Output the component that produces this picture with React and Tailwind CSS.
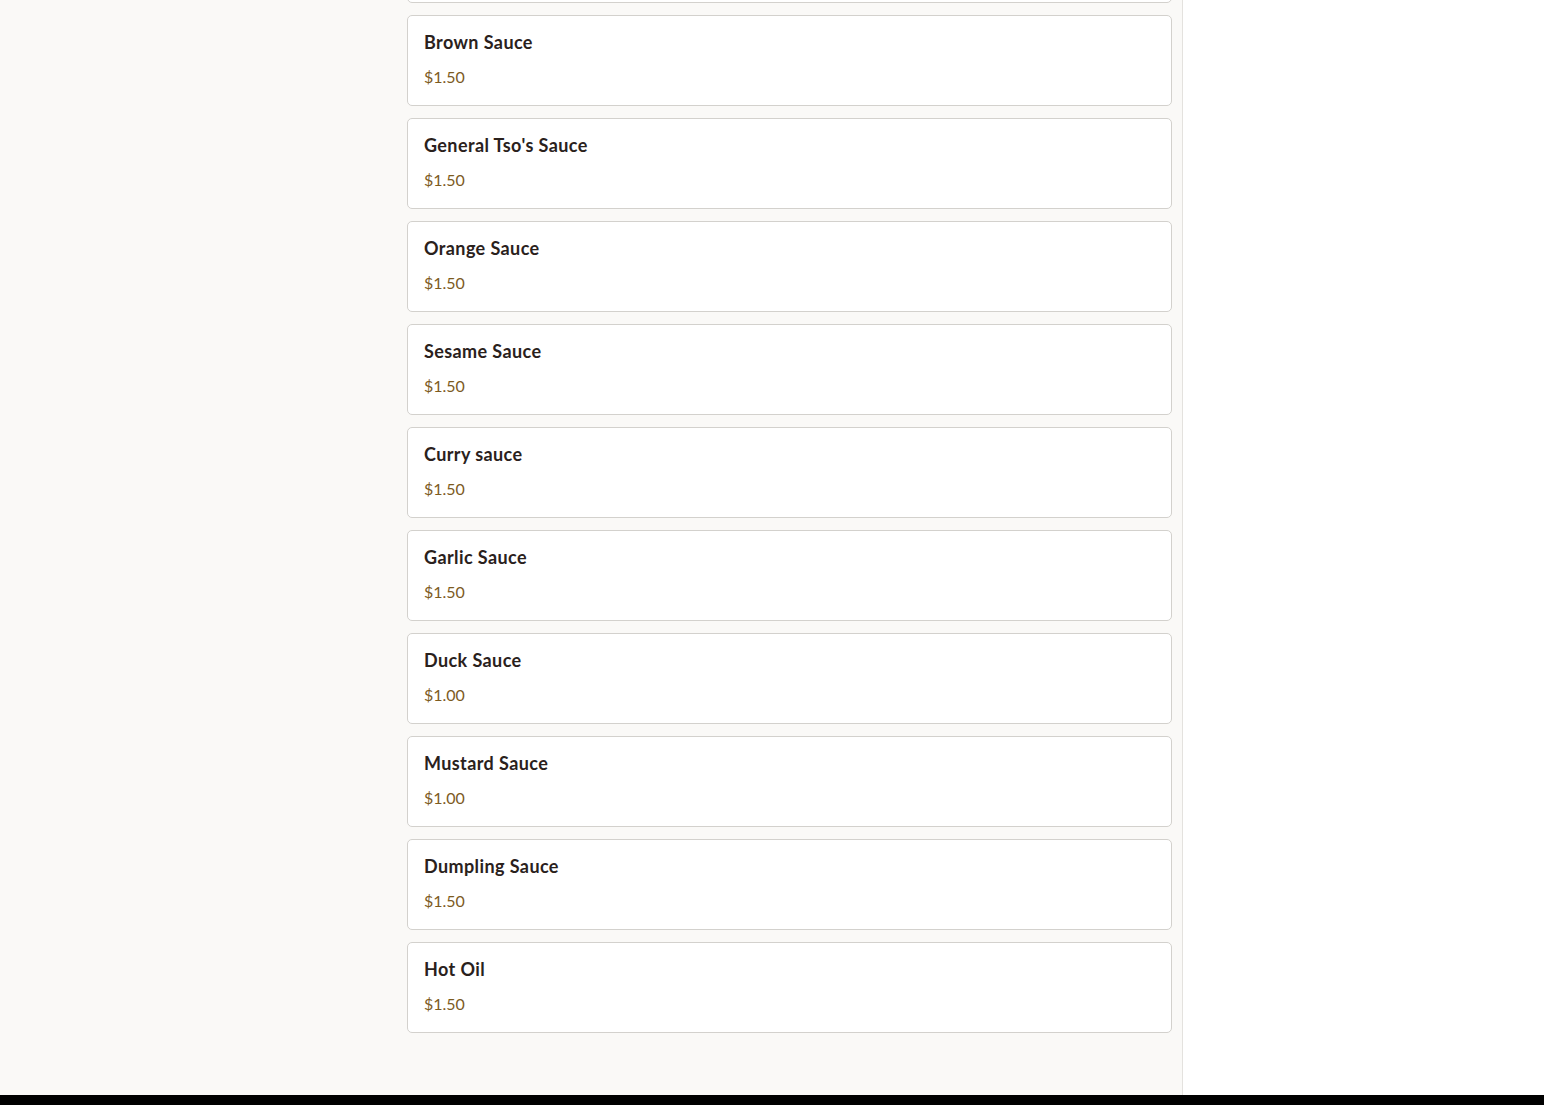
const SAUCES = [
  { name: "Sweet & Sour Sauce", price: "$1.50" },
  { name: "Brown Sauce", price: "$1.50" },
  { name: "General Tso's Sauce", price: "$1.50" },
  { name: "Orange Sauce", price: "$1.50" },
  { name: "Sesame Sauce", price: "$1.50" },
  { name: "Curry sauce", price: "$1.50" },
  { name: "Garlic Sauce", price: "$1.50" },
  { name: "Duck Sauce", price: "$1.00" },
  { name: "Mustard Sauce", price: "$1.00" },
  { name: "Dumpling Sauce", price: "$1.50" },
  { name: "Hot Oil", price: "$1.50" },
];

function ItemCard({ name, price }) {
  return (
    <div className="rounded-[5px] border border-[#d3d1cd] bg-white px-4 pt-[14px] pb-4">
      <p className="text-[18px] leading-6 font-bold tracking-[0.4px] text-[#2a211c]">
        {name}
      </p>
      <p className="mt-[11px] text-[16px] leading-6 text-[#7d5b1f]">{price}</p>
    </div>
  );
}

export default function App() {
  return (
    <div
      className="flex h-[1105px] flex-col overflow-hidden bg-white"
      style={{ fontFamily: "Lato, 'Noto Sans', sans-serif" }}
    >
      <div className="flex flex-1 overflow-hidden">
        <main className="w-[1183px] border-r border-[#e4e2de] bg-[#faf9f7] pl-[407px]">
          {/* list is scrolled: the card above Brown Sauce sits mostly off-screen */}
          <div className="-mt-[88px] flex w-[765px] flex-col gap-3">
            {SAUCES.map((s) => (
              <ItemCard key={s.name} name={s.name} price={s.price} />
            ))}
          </div>
        </main>
        <aside className="flex-1 bg-white" />
      </div>
      <footer className="h-[10px] bg-black" />
    </div>
  );
}
